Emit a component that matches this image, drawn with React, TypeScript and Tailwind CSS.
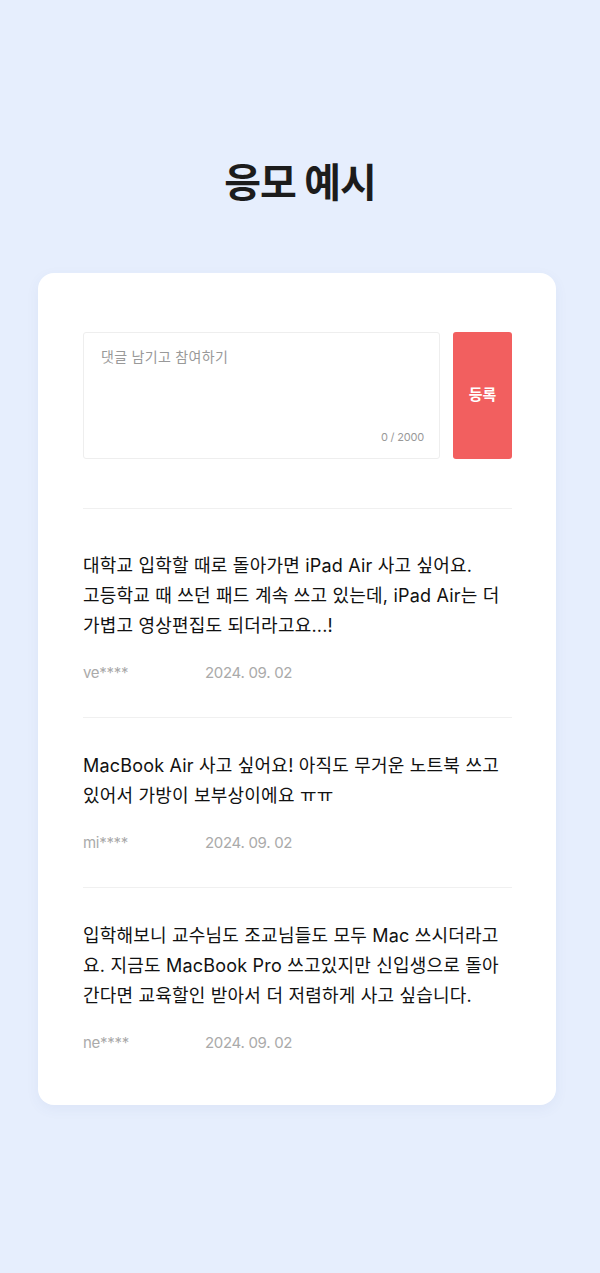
import { useState } from "react";

interface IComment {
  id: number;
  lines: string[];
  user: string;
  date: string;
}

const comments: IComment[] = [
  {
    id: 1,
    lines: [
      "대학교 입학할 때로 돌아가면 iPad Air 사고 싶어요.",
      "고등학교 때 쓰던 패드 계속 쓰고 있는데, iPad Air는 더",
      "가볍고 영상편집도 되더라고요...!",
    ],
    user: "ve****",
    date: "2024. 09. 02",
  },
  {
    id: 2,
    lines: [
      "MacBook Air 사고 싶어요! 아직도 무거운 노트북 쓰고",
      "있어서 가방이 보부상이에요 ㅠㅠ",
    ],
    user: "mi****",
    date: "2024. 09. 02",
  },
  {
    id: 3,
    lines: [
      "입학해보니 교수님도 조교님들도 모두 Mac 쓰시더라고",
      "요. 지금도 MacBook Pro 쓰고있지만 신입생으로 돌아",
      "간다면 교육할인 받아서 더 저렴하게 사고 싶습니다.",
    ],
    user: "ne****",
    date: "2024. 09. 02",
  },
];

const App = () => {
  const [text, setText] = useState("");

  return (
    <div
      className="min-h-[1273px] w-full bg-[#e6eefd] pt-[159px] pb-[168px]"
      style={{ fontFamily: 'Inter, "Noto Sans CJK KR", sans-serif' }}
    >
      <h1 className="text-center text-[40px] leading-[48px] font-bold tracking-[-1px] text-[#1c1c1c]">
        응모 예시
      </h1>

      <div className="ml-[38px] mt-[66px] w-[518px] rounded-[16px] bg-white pt-[59px] pb-[18px] pl-[45px] pr-[44px] shadow-[0_4px_14px_rgba(60,90,160,0.06)]">
        {/* 댓글 입력 */}
        <div className="flex gap-[13px] border-b border-[#f0f0f0] pb-[49px]">
          <div className="relative h-[127px] flex-1 rounded-[3px] border border-[#eeeeee]">
            <textarea
              value={text}
              onChange={(e) => setText(e.target.value.slice(0, 2000))}
              placeholder="댓글 남기고 참여하기"
              className="h-full w-full resize-none bg-transparent px-[17px] pt-[13px] text-[14px] leading-[22px] tracking-[0.3px] text-[#222] outline-none placeholder:text-[#999]"
            />
            <span className="absolute right-[15px] bottom-[13px] text-[11px] leading-[16px] tracking-[-0.2px] text-[#999]">
              {text.length} / 2000
            </span>
          </div>
          <button
            type="button"
            className="h-[127px] w-[59px] rounded-[3px] bg-[#f25f5f] text-[15px] font-bold text-white"
          >
            등록
          </button>
        </div>

        {/* 댓글 목록 */}
        <ul>
          {comments.map((c, i) => (
            <li
              key={c.id}
              className={
                i === 0
                  ? "border-b border-[#f0f0f0] pt-[42px] pb-[33px]"
                  : i === comments.length - 1
                  ? "pt-[33px] pb-[33px]"
                  : "border-b border-[#f0f0f0] pt-[33px] pb-[33px]"
              }
            >
              <p className="text-[18px] leading-[30px] tracking-[0.2px] whitespace-nowrap text-[#111111]">
                {c.lines.map((l, j) => (
                  <span key={j} className="block">
                    {l}
                  </span>
                ))}
              </p>
              <div className="mt-[21px] flex text-[15px] leading-[22px] tracking-[-0.3px] text-[#aaaaaa]">
                <span className="w-[122px]">{c.user}</span>
                <span>{c.date}</span>
              </div>
            </li>
          ))}
        </ul>
      </div>
    </div>
  );
};

export default App;
